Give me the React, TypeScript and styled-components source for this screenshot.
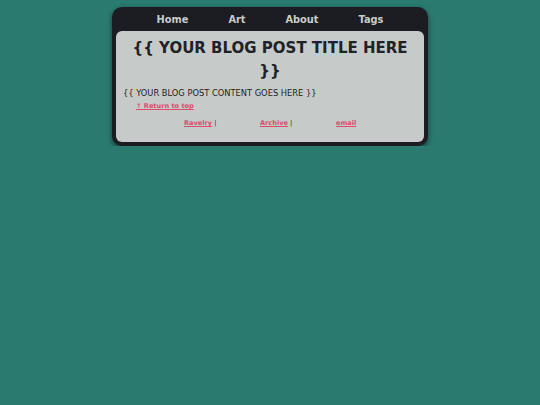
import styled, { createGlobalStyle } from 'styled-components';

const GlobalStyle = createGlobalStyle`
  html, body {
    margin: 0;
    padding: 0;
    background: #2a7a70;
    font-family: "DejaVu Sans", Verdana, sans-serif;
  }
`;

const Wrapper = styled.div`
  width: 316px;
  margin: 7px auto 0;
  padding: 0 4px 4px;
  box-sizing: border-box;
  background: #1b1d23;
  border-radius: 10px;
  box-shadow: 0 2px 5px rgba(0, 0, 0, 0.55);
`;

const Nav = styled.nav`
  height: 24px;
  display: flex;
  justify-content: center;
  align-items: center;
  gap: 40px;
  box-sizing: border-box;
`;

const NavLink = styled.a`
  font-size: 9.8px;
  font-weight: bold;
  color: #c9cccd;
  text-decoration: none;
  line-height: 1;
  margin-top: 1px;
`;

const Card = styled.main`
  background: #c6cbca;
  border-radius: 6px;
  padding: 6px 7px 13px;
  color: #1f2226;
`;

const Title = styled.h1`
  margin: 0 0 4px;
  font-size: 15px;
  line-height: 23px;
  text-align: center;
  font-weight: bold;
`;

const Content = styled.p`
  margin: 0;
  font-size: 8.3px;
  line-height: 12px;
`;

const TopLink = styled.a`
  display: block;
  margin-left: 13px;
  font-size: 6.6px;
  line-height: 14px;
  font-weight: bold;
  color: #dc4a6c;
`;

const Footer = styled.footer`
  display: flex;
  padding-left: 61px;
  margin-top: 4px;
  line-height: 12px;
`;

const FooterItem = styled.span`
  width: 76px;
  font-size: 6.6px;
  color: #2a2d31;
`;

const FooterLink = styled.a`
  font-weight: bold;
  color: #dc4a6c;
`;

const links = [
  { label: 'Ravelry', sep: true },
  { label: 'Archive', sep: true },
  { label: 'email', sep: false },
];

export default function App() {
  return (
    <>
      <GlobalStyle />
      <Wrapper>
        <Nav>
          <NavLink href="#">Home</NavLink>
          <NavLink href="#">Art</NavLink>
          <NavLink href="#">About</NavLink>
          <NavLink href="#">Tags</NavLink>
        </Nav>
        <Card>
          <Title>{'{{ YOUR BLOG POST TITLE HERE }}'}</Title>
          <Content>{'{{ YOUR BLOG POST CONTENT GOES HERE }}'}</Content>
          <TopLink href="#">↑ Return to top</TopLink>
          <Footer>
            {links.map((link) => (
              <FooterItem key={link.label}>
                <FooterLink href="#">{link.label}</FooterLink>
                {link.sep && ' |'}
              </FooterItem>
            ))}
          </Footer>
        </Card>
      </Wrapper>
    </>
  );
}
